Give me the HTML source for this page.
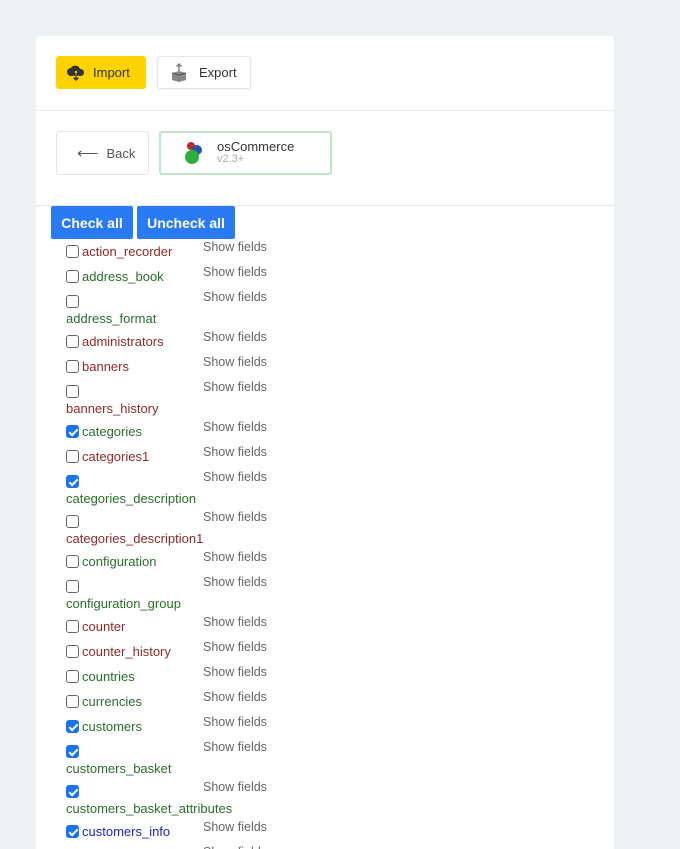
<!DOCTYPE html>
<html style="height:849px;overflow:hidden"><head><style>
body{margin:0;background:#eef1f3;font-family:"Liberation Sans",Arial,sans-serif;width:680px;height:849px;overflow:hidden;position:relative}
.card{position:absolute;left:36px;top:36px;width:578px;height:813px;background:#fff;border-radius:4px 4px 0 0}
.sep{position:absolute;left:36px;width:578px;height:1px;background:#e8eaec}
.btn{position:absolute;box-sizing:border-box;border-radius:3px;font-size:13px;display:flex;align-items:center;color:#333}
.ck{position:absolute;top:206px;height:33px;background:#2a7af3;color:#fff;font-weight:bold;font-size:14px;border-radius:2px;display:flex;align-items:center;justify-content:center}
.row{position:absolute;left:66px;width:140px;font-size:13px;line-height:17px}
.cb{display:inline-block;width:11px;height:11px;border:1px solid #666;border-radius:3px;vertical-align:-2px;margin-right:3px;background:#fff}
.cb.on{background:#1a73e8;border-color:#1a73e8;position:relative}
.cb.on:after{content:"";position:absolute;left:3.5px;top:0.5px;width:3px;height:7px;border:solid #fff;border-width:0 2px 2px 0;transform:rotate(45deg)}
.r{color:#8a2a2a}.g{color:#2e6b2e}.b{color:#2424b8}
.sf{position:absolute;left:203px;font-size:12.5px;color:#666;top:0}
#list{position:absolute;left:0;top:0;width:680px;height:849px;overflow:hidden}
</style></head><body>
<div class="card"></div>
<div class="sep" style="top:110px"></div>
<div class="sep" style="top:205px"></div>
<div class="btn" style="left:56px;top:56px;width:90px;height:33px;background:#ffd200;padding-left:11px">
<svg width="18" height="16" viewBox="0 0 18 16"><path d="M4 11a4 4 0 0 1 0-8 5 5 0 0 1 9 1 3.5 3.5 0 0 1 1 7z" fill="#333"/><path d="M9 6v8M6 11l3 3 3-3" stroke="#ffd200" stroke-width="2" fill="none"/><path d="M9 8v7M6.5 12.5l2.5 2.5 2.5-2.5" stroke="#333" stroke-width="1.4" fill="none"/></svg>
<span style="margin-left:8px">Import</span></div>
<div class="btn" style="left:157px;top:56px;width:94px;height:33px;border:1px solid #e6e6e6;padding-left:13px;box-shadow:0 1px 2px rgba(0,0,0,.06)">
<svg width="16" height="20" viewBox="0 0 16 20"><path d="M8 1v7M5.5 3.5L8 1l2.5 2.5" stroke="#777" stroke-width="1.4" fill="none"/><path d="M1 10l7-2 7 2v7l-7 2-7-2z" fill="#888"/><path d="M1 10l7 2 7-2" stroke="#555" fill="none"/></svg>
<span style="margin-left:12px">Export</span></div>
<div class="btn" style="left:56px;top:131px;width:93px;height:44px;border:1px solid #e6e6e6;padding-left:20px;color:#555">
<span style="font-size:15px">⟵</span><span style="margin-left:8px">Back</span></div>
<div class="btn" style="left:159px;top:131px;width:173px;height:44px;border:2px solid #bfe6c6;padding-left:22px">
<svg width="22" height="26" viewBox="0 0 22 26"><circle cx="8" cy="6" r="4" fill="#c0282d"/><circle cx="14" cy="10" r="5" fill="#2a56a8"/><circle cx="9" cy="17" r="7" fill="#2dae3a"/></svg>
<div style="margin-left:12px;line-height:12px"><div style="font-size:13px">osCommerce</div><div style="font-size:11px;color:#aaa">v2.3+</div></div></div>
<div class="ck" style="left:51px;width:82px">Check all</div>
<div class="ck" style="left:137px;width:98px">Uncheck all</div>
<div id="list"></div>
<script>
var items=[["action_recorder","r",0,0],["address_book","g",0,0],["address_format","g",0,1],["administrators","r",0,0],["banners","r",0,0],["banners_history","r",0,1],["categories","g",1,0],["categories1","r",0,0],["categories_description","g",1,1],["categories_description1","r",0,1],["configuration","g",0,0],["configuration_group","g",0,1],["counter","r",0,0],["counter_history","r",0,0],["countries","g",0,0],["currencies","g",0,0],["customers","g",1,0],["customers_basket","g",1,1],["customers_basket_attributes","g",1,1],["customers_info","b",1,0],["customers_products","g",1,0]];
var y=240,h="";
items.forEach(function(it){
h+='<div class="row" style="top:'+(y+3)+'px"><span class="cb'+(it[2]?' on':'')+'"></span>'+(it[3]?'<br>':'')+'<span class="'+it[1]+'">'+it[0]+'</span></div>';
h+='<div class="sf" style="top:'+(y)+'px">Show fields</div>';
y+=it[3]?40:25;});
document.getElementById('list').innerHTML=h;
</script>
</body></html>
